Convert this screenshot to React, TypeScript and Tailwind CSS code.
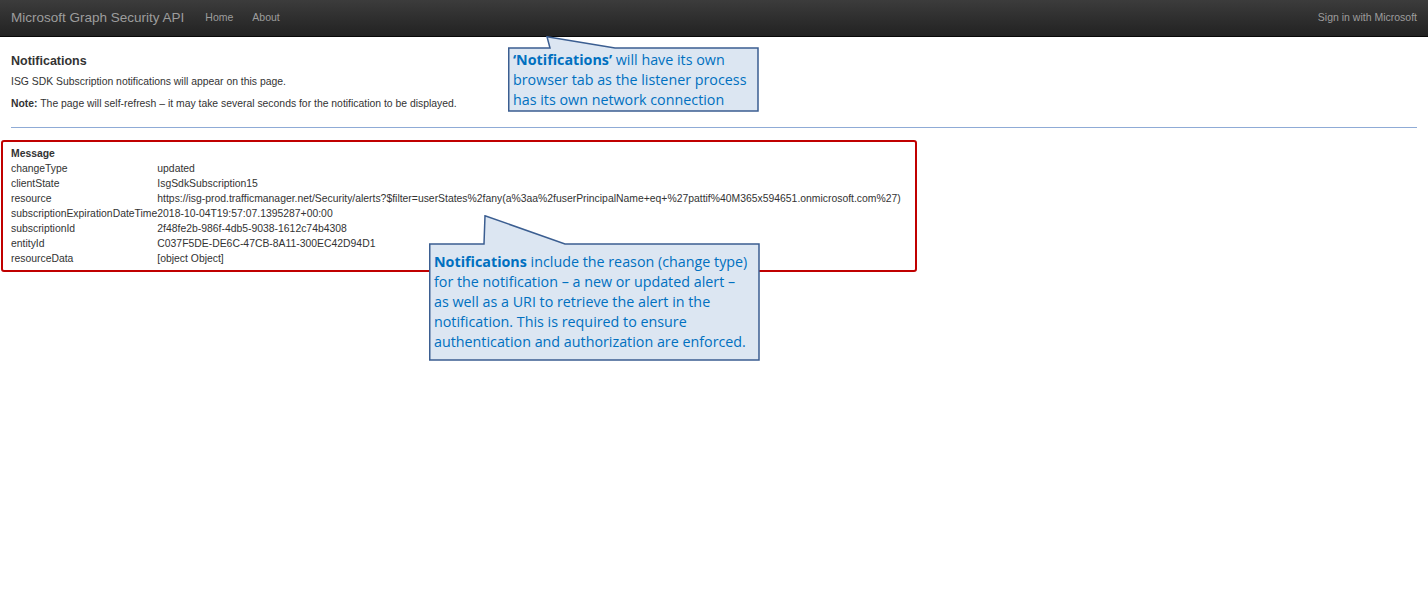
import React from "react";

const rows: [string, string][] = [
  ["changeType", "updated"],
  ["clientState", "IsgSdkSubscription15"],
  [
    "resource",
    "https://isg-prod.trafficmanager.net/Security/alerts?$filter=userStates%2fany(a%3aa%2fuserPrincipalName+eq+%27pattif%40M365x594651.onmicrosoft.com%27)",
  ],
  ["subscriptionExpirationDateTime", "2018-10-04T19:57:07.1395287+00:00"],
  ["subscriptionId", "2f48fe2b-986f-4db5-9038-1612c74b4308"],
  ["entityId", "C037F5DE-DE6C-47CB-8A11-300EC42D94D1"],
  ["resourceData", "[object Object]"],
];

const calloutFont = { fontFamily: '"Open Sans", "Noto Sans", sans-serif' };

export default function App() {
  return (
    <div className="relative w-[1428px] h-[605px] bg-white overflow-hidden font-['Liberation_Sans',Arial,sans-serif] text-[#333]">
      {/* Navbar */}
      <div className="h-[37px] flex items-center justify-between px-[11px] bg-gradient-to-b from-[#3c3c3c] to-[#222222] border-b border-[#080808]">
        <div className="flex items-center">
          <span className="text-[13.5px] text-[#9d9d9d]">Microsoft Graph Security API</span>
          <span className="ml-[21px] text-[10.5px] text-[#9d9d9d]">Home</span>
          <span className="ml-[19px] text-[10.5px] text-[#9d9d9d]">About</span>
        </div>
        <span className="text-[10.5px] text-[#9d9d9d]">Sign in with Microsoft</span>
      </div>

      {/* Content */}
      <div className="px-[11px] pt-[17px]">
        <div className="text-[12.5px] font-bold text-[#333] leading-[15px]">Notifications</div>
        <p className="mt-[6px] text-[10.4px] leading-[14px]">ISG SDK Subscription notifications will appear on this page.</p>
        <p className="mt-[8px] text-[10.4px] leading-[14px]">
          <b>Note:</b> The page will self-refresh – it may take several seconds for the notification to be displayed.
        </p>
        <div className="mt-[16px] h-px bg-[#8fabd6]" />
      </div>

      <div className="ml-[1px] mt-[12px] w-[916px] h-[132px] border-2 border-[#c00000] rounded-[3px] px-[8px] pt-[4px]">
        <div className="text-[10.4px] font-bold leading-[15px]">Message</div>
        <table className="text-[10.4px] leading-[15px] border-collapse">
          <tbody>
            {rows.map(([k, v]) => (
              <tr key={k}>
                <td className="p-0 align-top whitespace-nowrap">{k}</td>
                <td className="p-0 align-top whitespace-nowrap">{v}</td>
              </tr>
            ))}
          </tbody>
        </table>
      </div>

      {/* Callout 1 */}
      <div className="absolute left-[508px] top-[36px] w-[251px] h-[76px]">
        <svg className="absolute inset-0" width="251" height="76" viewBox="0 0 251 76">
          <polygon
            points="0.75,12 42,12 39,0.75 107,12 250,12 250,75 0.75,75"
            fill="#dce6f2"
            stroke="#3b5e91"
            strokeWidth="1.5"
          />
        </svg>
        <div
          className="absolute left-[5px] top-[14px] text-[14.3px] leading-[20px] text-[#0070c0] whitespace-nowrap"
          style={calloutFont}
        >
          <b>‘Notifications’</b> will have its own
          <br />
          browser tab as the listener process
          <br />
          has its own network connection
        </div>
      </div>

      {/* Callout 2 */}
      <div className="absolute left-[429px] top-[215px] w-[331px] h-[146px]">
        <svg className="absolute inset-0" width="331" height="146" viewBox="0 0 331 146">
          <polygon
            points="0.75,29 55,29 56,0.75 136,29 330,29 330,145 0.75,145"
            fill="#dce6f2"
            stroke="#3b5e91"
            strokeWidth="1.5"
          />
        </svg>
        <div
          className="absolute left-[5px] top-[37px] text-[14.3px] leading-[20px] text-[#0070c0] whitespace-nowrap"
          style={calloutFont}
        >
          <b>Notifications</b> include the reason (change type)
          <br />
          for the notification – a new or updated alert –
          <br />
          as well as a URI to retrieve the alert in the
          <br />
          notification. This is required to ensure
          <br />
          authentication and authorization are enforced.
        </div>
      </div>
    </div>
  );
}
